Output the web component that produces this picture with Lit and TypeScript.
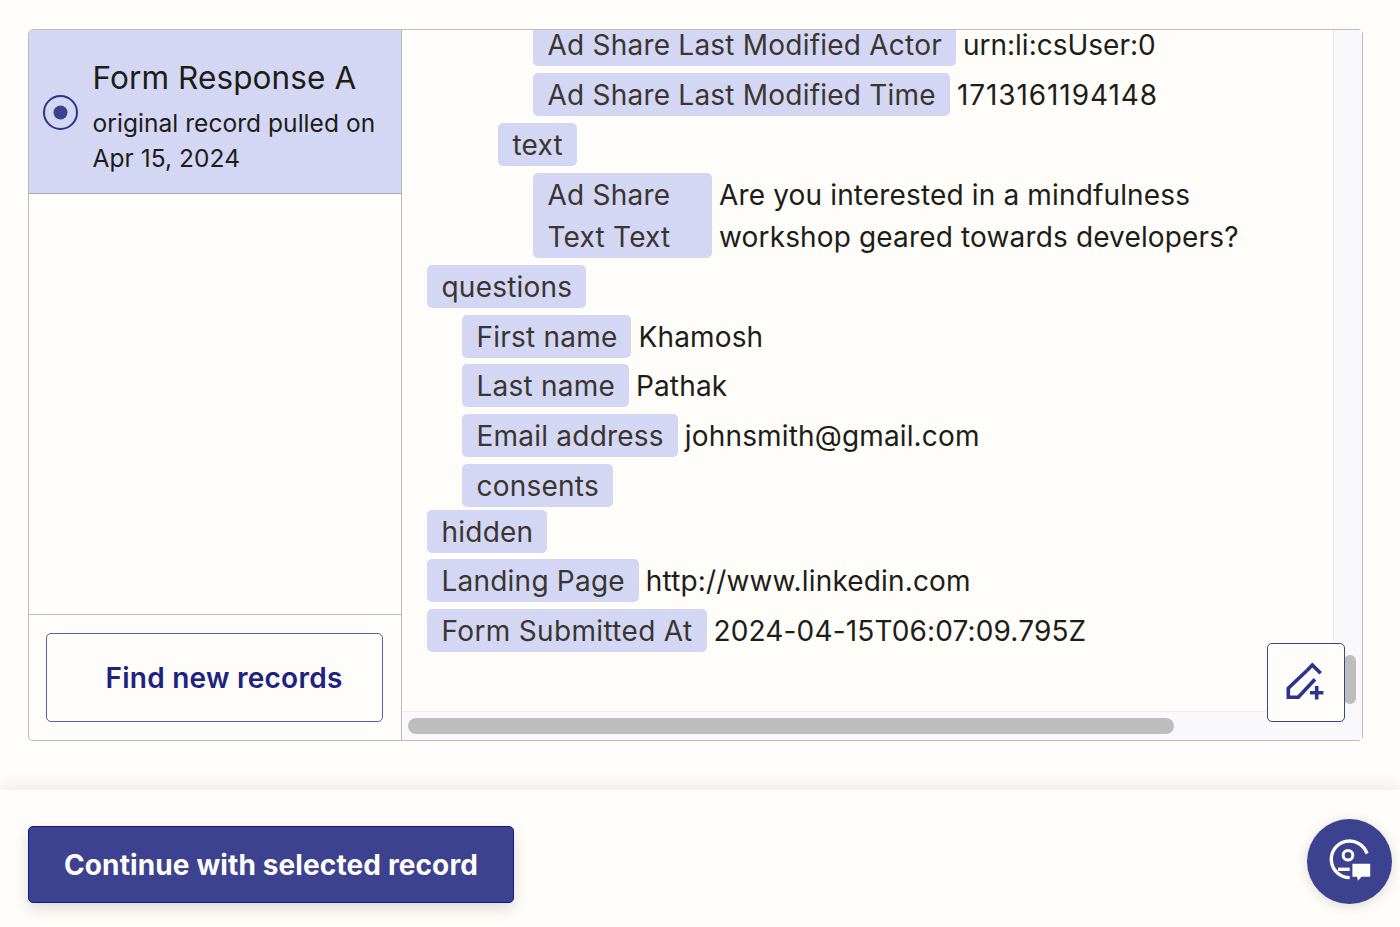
import { LitElement, html, css, nothing } from "lit";
import { customElement } from "lit/decorators.js";

interface Row { k: string; v?: string; i: number; w?: number; cls?: string; vcls?: string; }
const rows: Row[] = [
  { k: "Ad Share Last Modified Actor", v: "urn:li:csUser:0", i: 2, vcls: "plain" },
  { k: "Ad Share Last Modified Time", v: "1713161194148", i: 2, vcls: "num" },
  { k: "text", i: 1 },
  { k: "Ad Share Text Text", v: "Are you interested in a mindfulness workshop geared towards developers?", i: 2, w: 179, cls: "multi" },
  { k: "questions", i: 0 },
  { k: "First name", v: "Khamosh", i: 3 },
  { k: "Last name", v: "Pathak", i: 3 },
  { k: "Email address", v: "johnsmith@gmail.com", i: 3 },
  { k: "consents", i: 3, cls: "tight" },
  { k: "hidden", i: 0 },
  { k: "Landing Page", v: "http://www.linkedin.com", i: 0 },
  { k: "Form Submitted At", v: "2024-04-15T06:07:09.795Z", i: 0, cls: "wide" },
];
const indent = [0, 71, 106, 35];

@customElement("app-root")
export class AppRoot extends LitElement {
  static styles = css`
    :host { display: block; height: 927px; overflow: hidden; background: #fffdf9; font-family: Inter, "Liberation Sans", sans-serif; color: #2b2358; position: relative; }
    .main { height: 790px; box-sizing: border-box; padding: 29px 37px 0 28px; }
    .box { display: flex; height: 712px; box-sizing: border-box; border: 1px solid #bdbcb9; border-radius: 5px; position: relative; }
    .left { width: 373px; flex: none; border-right: 1px solid #b9b8b5; display: flex; flex-direction: column; box-sizing: border-box; }
    .rec { height: 164px; box-sizing: border-box; flex: none; background: #d3d7f4; border-bottom: 1px solid #a5a6b5; display: flex; align-items: center; padding: 0 14px; gap: 14.5px; border-radius: 4px 0 0 0; }
    .radio { width: 35px; height: 35px; flex: none; display: block; margin-top: 2px; }
    .rec-text { display: flex; flex-direction: column; color: #201c18; margin-top: 3px; }
    .title { font-size: 31.5px; line-height: 53px; padding-bottom: 2px; letter-spacing: .1px; }
    .sub { font-size: 24.5px; line-height: 35px; letter-spacing: .05px; white-space: nowrap; }
    .spacer { flex: 1; }
    .foot { height: 126px; box-sizing: border-box; flex: none; border-top: 1px solid #bdbcb9; padding: 18px 18px 18px 17px; display: flex; }
    .find { flex: 1; border: 1px solid #5a5f9f; border-radius: 5px; background: transparent; color: #1e2382; font: 600 28px Inter, sans-serif; letter-spacing: .25px; padding: 0 0 0 19px; display: flex; align-items: center; justify-content: center; }
    .right { flex: 1; min-width: 0; display: grid; grid-template-columns: 1fr 29px; grid-template-rows: 1fr 29px; background: #fffdf9; }
    .view { overflow: hidden; padding: 0 24px 0 25px; }
    .content { display: flex; flex-direction: column; margin-top: -6.7px; }
    .row { display: flex; align-items: flex-start; margin-bottom: 6.75px; gap: 7px; font-size: 28px; line-height: 42px; color: #201c18; }
    .multi { margin-bottom: 7.25px; }
    .tight { margin-bottom: 2.7px; }
    .k { flex: none; background: #d3d7f4; border-radius: 5px; padding: 1px 14px 0 14.5px; color: #3a3530; box-sizing: border-box; letter-spacing: .22px; }
    .wide .k { letter-spacing: .34px; }
    .v { max-width: 540px; padding-top: 1px; letter-spacing: .15px; }
    .plain { letter-spacing: 0; }
    .num { letter-spacing: .92px; }
    .vtrack { background: #f9f9fb; border-left: 1px solid #ececec; position: relative; padding: 0 7px; display: flex; flex-direction: column; justify-content: flex-end; }
    .vthumb { height: 49px; width: 12px; background: #bdbdbd; border-radius: 6px; margin-bottom: 7px; margin-left: 3px; }
    .htrack { background: #f9f9fb; border-top: 1px solid #ececec; padding: 6px 6px; box-sizing: border-box; }
    .hthumb { width: 766px; height: 16px; background: #bdbdbd; border-radius: 8px; }
    .corner { background: #f9f9fb; }
    .pen { position: absolute; left: 1238px; top: 613px; width: 78px; height: 79px; box-sizing: border-box; background: #fffdf9; border: 1px solid #3b418f; border-radius: 5px; }
    .pen svg { position: absolute; left: -1px; top: -1px; width: 78px; height: 79px; display: block; }
    .bar { height: 137px; box-sizing: border-box; background: #fffdf9; box-shadow: 0 -4px 14px rgba(60,55,50,.09); padding: 36px 28px; position: relative; }
    .cont { width: 486px; height: 77px; box-sizing: border-box; border: 1px solid #10188a; border-radius: 5px; background: #3c4190; color: #fffdf9; font: 700 28px Inter, sans-serif; letter-spacing: .12px; display: flex; align-items: center; justify-content: center; box-shadow: 0 6px 14px rgba(60,55,50,.16); }
    .fab { position: absolute; right: 8px; top: 29px; width: 85px; height: 85px; border-radius: 50%; background: #3c4190; box-shadow: 0 2px 12px rgba(60,55,50,.18); }
    .fab svg { width: 85px; height: 85px; display: block; }
  `;
  render() {
    return html`
      <div class="main">
        <div class="box">
          <div class="left">
            <div class="rec">
              <svg class="radio" viewBox="0 0 35 35"><circle cx="17.5" cy="17.5" r="16.5" fill="none" stroke="#2d3387" stroke-width="2"/><circle cx="17.5" cy="17.5" r="7" fill="#3c4190"/></svg>
              <div class="rec-text">
                <span class="title">Form Response A</span>
                <span class="sub">original record pulled on<br>Apr 15, 2024</span>
              </div>
            </div>
            <div class="spacer"></div>
            <div class="foot"><button class="find">Find new records</button></div>
          </div>
          <div class="right">
            <div class="view"><div class="content">
              ${rows.map(r => html`<div class="row ${r.cls ?? ""}" style="margin-left:${indent[r.i]}px">
                <span class="k" style=${r.w ? `width:${r.w}px` : ""}>${r.k}</span>
                ${r.v ? html`<span class="v ${r.vcls ?? ""}">${r.v}</span>` : nothing}
              </div>`)}
            </div></div>
            <div class="vtrack"><div class="vthumb"></div></div>
            <div class="htrack"><div class="hthumb"></div></div>
            <div class="corner"></div>
          </div>
          <div class="pen"><svg viewBox="0 0 78 79" fill="none" stroke="#2b3390" stroke-width="3.6"><path d="M40 27.5 21.3 45.3V54.3H31.3L48 36.3"/><path d="M40 27.5 45.3 22l8.4 8.3"/><path d="M49.7 43v13.4M43 49.7h13.4" stroke-width="3.6"/></svg></div>
        </div>
      </div>
      <div class="bar">
        <button class="cont">Continue with selected record</button>
        <div class="fab"><svg viewBox="0 0 85 85" fill="none" stroke="#fffdf9" stroke-width="3.4"><path d="M60 34.6A18.3 18.3 0 1 0 42.7 58.6"/><circle cx="41" cy="36.3" r="4.8" stroke-width="3"/><path d="M31 50.3h11.7"/><path d="M45.4 44.8H63.2V57.8H54.6L51 61.8 50 57.8H45.4Z" fill="#fffdf9" stroke="none"/></svg></div>
      </div>
    `;
  }
}
